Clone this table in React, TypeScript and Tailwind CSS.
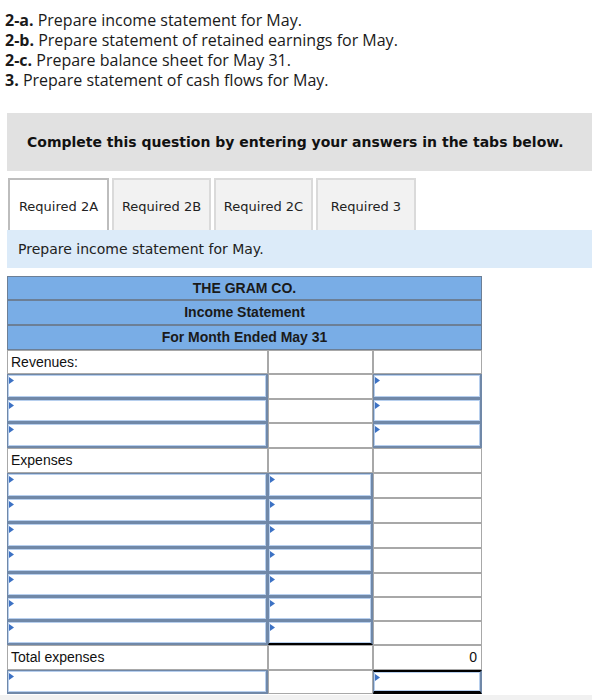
import React from "react";

type Kind = "plain" | "input";
type Cell = {
  kind: Kind;
  text?: string;
  align?: "left" | "right";
  extra?: string;
};
type Row = { h: string; cells: [Cell, Cell, Cell] };

const P: Cell = { kind: "plain" };
const I: Cell = { kind: "input" };

const rows: Row[] = [
  { h: "h-[24px]", cells: [{ kind: "plain", text: "Revenues:" }, P, P] },
  { h: "h-[25px]", cells: [I, P, I] },
  { h: "h-[24px]", cells: [I, P, I] },
  { h: "h-[25px]", cells: [I, P, I] },
  { h: "h-[25px]", cells: [{ kind: "plain", text: "Expenses" }, P, P] },
  { h: "h-[25px]", cells: [I, I, P] },
  { h: "h-[25px]", cells: [I, I, P] },
  { h: "h-[25px]", cells: [I, I, P] },
  { h: "h-[25px]", cells: [I, I, P] },
  { h: "h-[24px]", cells: [I, I, P] },
  { h: "h-[24px]", cells: [I, I, P] },
  { h: "h-[24px]", cells: [I, { kind: "input", extra: "border-b-[2px] border-b-black" }, P] },
  {
    h: "h-[25px]",
    cells: [{ kind: "plain", text: "Total expenses" }, P, { kind: "plain", text: "0", align: "right" }],
  },
  {
    h: "h-[24px]",
    cells: [I, P, { kind: "input", extra: "border-t-[2px] border-t-black border-b-[3px] border-b-black" }],
  },
];

function Tri() {
  return (
    <svg className="absolute left-[1px] top-[2px]" width="5" height="7" viewBox="0 0 5 7">
      <path d="M0 0 L5 3.5 L0 7 Z" fill="#3d72c4" />
    </svg>
  );
}

function CellView({ c }: { c: Cell }) {
  if (c.kind === "input") {
    return (
      <div
        className={`relative h-full border border-[#7088a8] border-b-[2px] border-r-[2px] ${c.extra ?? ""}`}
      >
        <div className="h-full border border-[#b7cfee] bg-white" />
        <Tri />
      </div>
    );
  }
  return (
    <div
      className={`h-full border border-[#a8a8a8] bg-white flex items-center px-[3px] text-[14px] text-[#111] ${
        c.align === "right" ? "justify-end pr-[4px]" : ""
      }`}
    >
      {c.text}
    </div>
  );
}

export default function App() {
  const tabs = ["Required 2A", "Required 2B", "Required 2C", "Required 3"];
  const tabW = ["w-[101px]", "w-[99px]", "w-[99px]", "w-[100px]"];
  return (
    <div className="w-[592px] h-[700px] bg-white overflow-hidden relative flex flex-col">
      <div
        className="pl-[5px] pt-[10px] text-[16px] leading-[20px] text-[#1a1a1a]"
        style={{ fontFamily: '"Open Sans", sans-serif' }}
      >
        <div>
          <b>2-a.</b> Prepare income statement for May.
        </div>
        <div>
          <b>2-b.</b> Prepare statement of retained earnings for May.
        </div>
        <div>
          <b>2-c.</b> Prepare balance sheet for May 31.
        </div>
        <div>
          <b>3.</b> Prepare statement of cash flows for May.
        </div>
      </div>

      <div
        className="ml-[7px] mt-[23px] h-[58px] bg-[#e1e1e1] flex items-center pl-[20px] text-[14px] font-bold text-[#111]"
        style={{ fontFamily: '"DejaVu Sans", Verdana, sans-serif' }}
      >
        Complete this question by entering your answers in the tabs below.
      </div>

      <div
        className="ml-[8px] mt-[7px] h-[52px] flex gap-[3px] text-[13px] text-[#222]"
        style={{ fontFamily: '"DejaVu Sans", Verdana, sans-serif' }}
      >
        {tabs.map((t, i) => (
          <div
            key={t}
            className={`${tabW[i]} h-full flex items-center justify-center pt-[3px] border-2 border-b-0 ${
              i === 0 ? "bg-white border-[#bdbdbd]" : "bg-[#f2f2f2] border-[#dadada]"
            }`}
          >
            {t}
          </div>
        ))}
      </div>

      <div
        className="ml-[7px] h-[38px] bg-[#dcebf9] flex items-center pl-[11px] text-[14px] text-[#222]"
        style={{ fontFamily: '"DejaVu Sans", Verdana, sans-serif' }}
      >
        Prepare income statement for May.
      </div>

      <div
        className="ml-[7px] mt-[8px] w-[475px]"
        style={{ fontFamily: '"Liberation Sans", Arial, sans-serif' }}
      >
        <div className="bg-[#79ade6] border border-[#6c7f96] text-[14px] font-bold text-[#1a1a1a]">
          <div className="h-[24px] flex items-center justify-center border-b-2 border-[#6c7f96]">
            THE GRAM CO.
          </div>
          <div className="h-[25px] flex items-center justify-center border-b-2 border-[#6c7f96]">
            Income Statement
          </div>
          <div className="h-[23px] flex items-center justify-center">For Month Ended May 31</div>
        </div>
        {rows.map((r, i) => (
          <div key={i} className={`grid grid-cols-[261px_105px_109px] ${r.h}`}>
            {r.cells.map((c, j) => (
              <CellView key={j} c={c} />
            ))}
          </div>
        ))}
      </div>

      <div className="absolute left-0 right-0 top-[695px] h-[5px] bg-[#f1f1f1]" />
    </div>
  );
}
